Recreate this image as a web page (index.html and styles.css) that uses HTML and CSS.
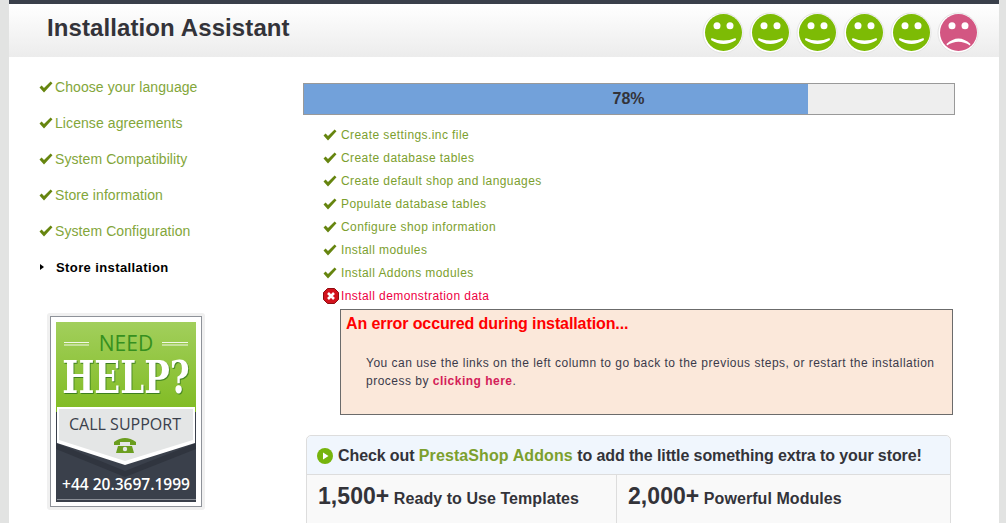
FILE: index.html
```html
<!DOCTYPE html>
<html>
  <head>
    <meta charset="UTF-8">
    <title>Installation Assistant</title>
    <link rel="stylesheet" href="styles.css">
  </head>
  <body>
    <svg width="0" height="0" class="defs">
      <defs>
        <symbol id="check" viewBox="0 0 14 12">
          <path d="M0.5 6.5 L2.6 4.6 L5 7 L11.6 0.5 L13.5 2.2 L5 11.5 Z" fill="#66850f"/>
        </symbol>
        <symbol id="happy" viewBox="0 0 42 42">
          <circle cx="21" cy="21" r="20" fill="#fff" stroke="#e4e4e4" stroke-width="1"/>
          <circle cx="21.5" cy="20.5" r="18.5" fill="#7dbb05"/>
          <circle cx="15" cy="13.8" r="3.5" fill="#fff"/>
          <circle cx="28" cy="13.8" r="3.5" fill="#fff"/>
          <path d="M9.5 26 Q21.5 31 33.5 26 L34 28 Q21.5 36 9 28 Z" fill="#fff"/>
        </symbol>
        <symbol id="sad" viewBox="0 0 42 42">
          <circle cx="21" cy="21" r="20" fill="#fff" stroke="#e4e4e4" stroke-width="1"/>
          <circle cx="21.5" cy="20.5" r="18.5" fill="#d35682"/>
          <circle cx="15" cy="13.8" r="3.5" fill="#fff"/>
          <circle cx="28" cy="13.8" r="3.5" fill="#fff"/>
          <path d="M9.5 32 Q21.5 21 33.5 32 L33 33.5 Q21.5 26 10 33.5 Z" fill="#fff"/>
        </symbol>
      </defs>
    </svg>
    <div class="page">
      <div class="topbar"></div>
      <div class="header">
        <h1>Installation Assistant</h1>
        <div class="smileys">
          <svg class="smiley"><use href="#happy"/></svg>
          <svg class="smiley"><use href="#happy"/></svg>
          <svg class="smiley"><use href="#happy"/></svg>
          <svg class="smiley"><use href="#happy"/></svg>
          <svg class="smiley"><use href="#happy"/></svg>
          <svg class="smiley"><use href="#sad"/></svg>
        </div>
      </div>
      <div class="content">
        <div class="sidebar">
          <ul class="steps">
            <li><svg class="check"><use href="#check"/></svg>Choose your language</li>
            <li><svg class="check"><use href="#check"/></svg>License agreements</li>
            <li><svg class="check"><use href="#check"/></svg>System Compatibility</li>
            <li><svg class="check"><use href="#check"/></svg>Store information</li>
            <li><svg class="check"><use href="#check"/></svg>System Configuration</li>
            <li class="current"><span class="arrow"></span>Store installation</li>
          </ul>
          <div class="help">
            <div class="help-inner">
              <svg width="140" height="180" viewBox="0 0 140 180">
                <defs>
                  <linearGradient id="helpbg" x1="0" y1="0" x2="0" y2="1">
                    <stop offset="0" stop-color="#a2cf5c"/>
                    <stop offset="1" stop-color="#80bb22"/>
                  </linearGradient>
                </defs>
                <rect width="140" height="180" fill="#3a404b"/>
                <rect width="140" height="90" fill="url(#helpbg)"/>
                <path d="M0 121 L69 149 L140 121 V127 L69 155 L0 127 Z" fill="#30353f"/>
                <path d="M1 85 H139 V121 L69 143 L1 121 Z" fill="#fff"/>
                <path d="M3 87 H137 V118 L69 139 L3 118 Z" fill="#e4e6e6"/>
                <path d="M8 20.5 H33 M8 23 H33 M106 20.5 H132 M106 23 H132" stroke="#f1f7e6" stroke-width="1"/>
                <text x="70" y="29" class="need">NEED</text>
                <text class="helpword" transform="translate(70 71) scale(0.757 1)">HELP?</text>
                <text x="69" y="108" class="call" textLength="112" lengthAdjust="spacingAndGlyphs">CALL SUPPORT</text>
                <path d="M58 120 Q69 112 80 120 V123 H74 V120 H64 V123 H58 Z M62 124 H76 L78 131 H60 Z" fill="#6b9e1f"/>
                <circle cx="69" cy="127" r="2.2" fill="#e4e6e6"/>
                <text x="70" y="168" class="phone" textLength="128" lengthAdjust="spacingAndGlyphs">+44 20.3697.1999</text>
                <rect x="1" y="177" width="139" height="1" fill="#8a8e96"/>
              </svg>
            </div>
          </div>
        </div>
        <div class="main">
          <div class="progress">
            <div class="progress-fill"></div>
            <span class="progress-label">78%</span>
          </div>
          <ul class="tasks">
            <li><svg class="check"><use href="#check"/></svg>Create settings.inc file</li>
            <li><svg class="check"><use href="#check"/></svg>Create database tables</li>
            <li><svg class="check"><use href="#check"/></svg>Create default shop and languages</li>
            <li><svg class="check"><use href="#check"/></svg>Populate database tables</li>
            <li><svg class="check"><use href="#check"/></svg>Configure shop information</li>
            <li><svg class="check"><use href="#check"/></svg>Install modules</li>
            <li><svg class="check"><use href="#check"/></svg>Install Addons modules</li>
            <li class="failed">
              <svg class="error-icon" viewBox="0 0 16 16">
                <path d="M4.5 0.5 H11.5 L15.5 4.5 V11.5 L11.5 15.5 H4.5 L0.5 11.5 V4.5 Z" fill="#d2121c" stroke="#8e0d12" stroke-width="1"/>
                <path d="M5 5 L11 11 M11 5 L5 11" stroke="#fff" stroke-width="2.6"/>
              </svg>Install demonstration data</li>
          </ul>
          <div class="error-box">
            <h2>An error occured during installation...</h2>
            <p>You can use the links on the left column to go back to the previous steps, or restart the installation process by <a href="#">clicking here</a>.</p>
          </div>
          <div class="addons">
            <div class="addons-head">
              <svg class="play" viewBox="0 0 16 16">
                <circle cx="8" cy="8" r="8" fill="#76b40c"/>
                <path d="M6 4.5 L11.5 8 L6 11.5 Z" fill="#fff"/>
              </svg>
              <span>Check out <a href="#">PrestaShop Addons</a> to add the little something extra to your store!</span>
            </div>
            <div class="addons-cols">
              <div class="addons-col"><b>1,500+</b> Ready to Use Templates</div>
              <div class="addons-col"><b>2,000+</b> Powerful Modules</div>
            </div>
          </div>
        </div>
      </div>
    </div>
  </body>
</html>
```

FILE: styles.css
```css
* {
  box-sizing: border-box;
}
html, body {
  height: 523px;
  overflow: hidden;
}
body {
  margin: 0;
  background-color: #E2E3E2;
  font-family: "Liberation Sans", Arial, sans-serif;
}
ul {
  list-style: none;
  margin: 0;
  padding: 0;
}
a {
  text-decoration: none;
}
.defs {
  position: absolute;
}
.page {
  margin: 0 7px 0 9px;
  height: 523px;
  background-color: #FFF;
}
.topbar {
  height: 4px;
  background-color: #3A404B;
}
.header {
  display: flex;
  justify-content: space-between;
  align-items: center;
  height: 53px;
  padding: 0 20px 0 38px;
  background: linear-gradient(#FFF, #ECECEC);
}
h1 {
  margin: 0 0 5px;
  font-size: 24px;
  font-weight: bold;
  letter-spacing: 0.1px;
  color: #333339;
}
.smileys {
  display: flex;
  gap: 5px;
  margin-top: 4px;
}
.smiley {
  width: 42px;
  height: 42px;
}
.content {
  display: flex;
}
.sidebar {
  width: 294px;
  padding: 12px 0 0 30px;
}
.steps li {
  display: flex;
  align-items: center;
  height: 36px;
  font-size: 14px;
  letter-spacing: 0.08px;
  color: #83A63A;
}
.steps .check {
  margin-right: 2px;
}
.steps .current {
  font-size: 13px;
  font-weight: bold;
  color: #000;
  letter-spacing: 0.4px;
}
.arrow {
  width: 0;
  height: 0;
  margin: 0 12px 0 1px;
  border-left: 4px solid #000;
  border-top: 3.5px solid transparent;
  border-bottom: 3.5px solid transparent;
}
.check {
  flex: none;
  width: 14px;
  height: 12px;
}
.help {
  width: 158px;
  height: 197px;
  margin: 28px 0 0 8px;
  padding: 3px;
  background-color: #F0F0F0;
  border-radius: 3px;
}
.help-inner {
  height: 191px;
  padding: 5px;
  background-color: #FFF;
  border: 1px solid #8E9299;
}
.help-inner svg {
  display: block;
}
.help text {
  text-anchor: middle;
  font-family: "Open Sans", sans-serif;
}
.help .need {
  font-size: 21px;
  fill: #36901F;
}
.help .helpword {
  font-family: "DejaVu Serif", serif;
  font-size: 45px;
  font-weight: bold;
  fill: #FFF;
  filter: drop-shadow(1.5px 1.5px 0 #3D7F1F);
}
.help .call {
  font-size: 16px;
  font-weight: 500;
  fill: #3A404B;
}
.help .phone {
  font-size: 16px;
  font-weight: 600;
  fill: #FFF;
}
.main {
  width: 652px;
  padding-top: 26px;
}
.progress {
  position: relative;
  height: 32px;
  background-color: #EEE;
  border: 1px solid #999;
}
.progress-fill {
  width: 504px;
  height: 100%;
  background-color: #72A1DA;
}
.progress-label {
  position: absolute;
  top: 0;
  left: -1px;
  right: 0;
  line-height: 30px;
  text-align: center;
  font-size: 16px;
  font-weight: bold;
  color: #333339;
}
.tasks {
  margin-top: 8px;
  padding-left: 20px;
}
.tasks li {
  display: flex;
  align-items: center;
  height: 23px;
  font-size: 12px;
  letter-spacing: 0.42px;
  color: #7CA02E;
}
.tasks .check {
  margin-right: 4px;
}
.tasks .failed {
  color: #EE0044;
}
.error-icon {
  flex: none;
  width: 16px;
  height: 16px;
  margin: 0 2px 0 0;
}
.error-box {
  width: 613px;
  height: 106px;
  margin: 2px 0 0 37px;
  padding: 5px;
  background-color: #FBE8DA;
  border: 1px solid #6B6B6B;
}
.error-box h2 {
  margin: 0;
  font-size: 16px;
  line-height: 18px;
  letter-spacing: -0.1px;
  color: #F00;
}
.error-box p {
  margin: 21px 0 0 20px;
  font-size: 12px;
  line-height: 18px;
  letter-spacing: 0.49px;
  color: #3A3A4A;
}
.error-box a {
  font-weight: bold;
  color: #D32058;
}
.addons {
  width: 645px;
  margin: 20px 0 0 3px;
  background-color: #F9F9F9;
  border: 1px solid #DDD;
  border-radius: 5px;
}
.addons-head {
  display: flex;
  align-items: center;
  gap: 5px;
  height: 39px;
  padding: 2px 0 0 10px;
  font-size: 16px;
  font-weight: bold;
  letter-spacing: -0.1px;
  color: #333339;
  background-color: #F0F6FD;
  border-bottom: 1px solid #DDD;
  border-radius: 5px 5px 0 0;
}
.play {
  flex: none;
  width: 16px;
  height: 16px;
}
.addons-head a {
  letter-spacing: 0.1px;
  color: #7CA02E;
}
.addons-cols {
  display: flex;
  height: 120px;
}
.addons-col {
  width: 309px;
  padding: 8px 11px;
  font-size: 16px;
  font-weight: bold;
  letter-spacing: 0.06px;
  color: #333339;
}
.addons-col + .addons-col {
  border-left: 1px solid #DDD;
}
.addons-col b {
  font-size: 23px;
}
```
